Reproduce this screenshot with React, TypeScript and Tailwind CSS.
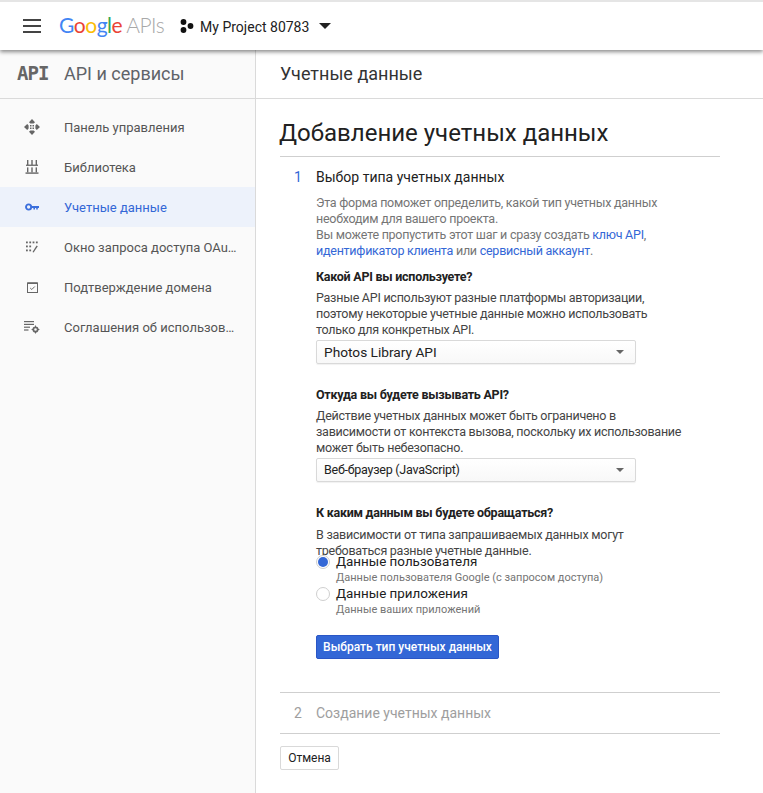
import React from 'react';

const font = { fontFamily: 'Roboto, "Liberation Sans", sans-serif' };

const DashIcon = () => (
  <svg width="16" height="16" viewBox="0 0 16 16" fill="#666">
    <path d="M8 0 11 3.2 9.6 4.6H6.4L5 3.2zM8 16 5 12.8 6.4 11.4H9.6L11 12.8zM0 8 3.2 5 4.6 6.4V9.6L3.2 11zM16 8 12.8 11 11.4 9.6V6.4L12.8 5z" />
    <rect x="6" y="6" width="1.5" height="1.5" />
    <rect x="8.5" y="6" width="1.5" height="1.5" />
    <rect x="6" y="8.5" width="1.5" height="1.5" />
    <rect x="8.5" y="8.5" width="1.5" height="1.5" />
  </svg>
);

const LibraryIcon = () => (
  <svg width="14" height="14" viewBox="0 0 14 14" fill="#666">
    <rect x="2" y="0" width="1.4" height="5" />
    <rect x="6.3" y="0" width="1.4" height="5" />
    <rect x="10.6" y="0" width="1.4" height="5" />
    <rect x="1" y="4.6" width="12" height="1.3" />
    <rect x="2" y="7.4" width="1.4" height="5" />
    <rect x="6.3" y="7.4" width="1.4" height="5" />
    <rect x="10.6" y="7.4" width="1.4" height="5" />
    <rect x="0.5" y="12.4" width="13" height="1.4" />
  </svg>
);

const KeyIcon = () => (
  <svg width="14" height="8" viewBox="0 0 14 8" fill="none">
    <circle cx="3.6" cy="4" r="2.6" stroke="#3b6fdc" strokeWidth="1.9" />
    <path d="M6 3h8v2h-1.2v1.6h-1.6V5H10v1.6H8.4V5H6z" fill="#3b6fdc" />
  </svg>
);

const ConsentIcon = () => (
  <svg width="12" height="12" viewBox="0 0 12 12" fill="#666">
    <rect x="0" y="0.5" width="1.8" height="1.8" />
    <rect x="3.3" y="0.5" width="1.8" height="1.8" />
    <rect x="6.6" y="0.5" width="1.8" height="1.8" />
    <rect x="9.9" y="0.5" width="1.8" height="1.8" />
    <rect x="0" y="4.5" width="1.8" height="1.8" />
    <rect x="3.3" y="4.5" width="1.8" height="1.8" />
    <rect x="3.3" y="8.5" width="1.8" height="1.8" />
    <rect x="0" y="8.5" width="1.8" height="1.8" />
    <path d="M6.5 11 10.6 4.6 11.8 5.3 7.6 11.6z" />
  </svg>
);

const DomainIcon = () => (
  <svg width="11" height="11" viewBox="0 0 11 11" fill="none" stroke="#666">
    <rect x="0.5" y="1" width="10" height="9.5" strokeWidth="1" />
    <path d="M0.5 1.2h10" strokeWidth="1.6" />
    <path d="M3.2 6 4.8 7.5 7.8 4.5" strokeWidth="1" />
  </svg>
);

const AgreementIcon = () => (
  <svg width="16" height="14" viewBox="0 0 16 14" fill="#666">
    <rect x="0" y="1" width="10" height="1.2" />
    <rect x="0" y="3.8" width="10" height="1.2" />
    <rect x="0" y="6.6" width="6" height="1.2" />
    <rect x="0" y="9.4" width="4.5" height="1.2" />
    <circle cx="11.5" cy="9.5" r="2.2" fill="none" stroke="#666" strokeWidth="1.8" />
    <path d="M11 5.6h1v1.4h-1zM11 12h1v1.4h-1zM7.6 9h1.4v1H7.6zM14 9h1.4v1H14z" />
  </svg>
);

const navItems = [
  { label: 'Панель управления', icon: <DashIcon /> },
  { label: 'Библиотека', icon: <LibraryIcon /> },
  { label: 'Учетные данные', icon: <KeyIcon />, active: true },
  { label: 'Окно запроса доступа OAu…', icon: <ConsentIcon /> },
  { label: 'Подтверждение домена', icon: <DomainIcon /> },
  { label: 'Соглашения об использов…', icon: <AgreementIcon /> },
];

const Select = ({ value, textClass }: { value: string; textClass: string }) => (
  <div className="w-[320px] h-[24px] flex items-center justify-between pl-[7px] pr-[11px] border border-[#d9d9d9] rounded-[2px] bg-gradient-to-b from-white to-[#f8f8f8] shadow-[0_1px_1px_rgba(0,0,0,0.06)] text-[#212121]">
    <span className={textClass}>{value}</span>
    <span className="w-0 h-0 border-x-[4px] border-x-transparent border-t-[4px] border-t-[#666]" />
  </div>
);

const Radio = ({ checked, title, sub }: { checked?: boolean; title: string; sub: string }) => (
  <div className="flex">
    <div className="w-[14px] h-[14px] mt-[1px] rounded-full border border-[#cfcfcf] bg-white flex items-center justify-center shrink-0">
      {checked && <div className="w-[10px] h-[10px] rounded-full bg-[#3367d6]" />}
    </div>
    <div className="ml-[6px]">
      <div className="text-[13.4px] leading-[16px] text-[#212121]">{title}</div>
      <div className="text-[11px] leading-[15px] text-[#757575]">{sub}</div>
    </div>
  </div>
);

export default function App() {
  return (
    <div className="w-[763px] h-[793px] bg-white overflow-hidden flex flex-col" style={font}>
      <header className="relative z-10 h-[50px] shrink-0 bg-white border-t-2 border-[#e5e5e5] shadow-[0_2px_4px_rgba(0,0,0,0.45)] flex items-center">
        <div className="ml-[23px] w-[18px] flex flex-col gap-[4px]">
          <div className="h-[2px] bg-[#444]" />
          <div className="h-[2px] bg-[#444]" />
          <div className="h-[2px] bg-[#444]" />
        </div>
        <div className="ml-[18px] text-[21px] leading-none tracking-[-0.5px] flex items-baseline mt-[-3px]" style={{ fontFamily: 'Lato, Roboto, sans-serif' }}>
          <span className="text-[#4285f4]">G</span>
          <span className="text-[#ea4335]">o</span>
          <span className="text-[#fbbc05]">o</span>
          <span className="text-[#4285f4]">g</span>
          <span className="text-[#34a853]">l</span>
          <span className="text-[#ea4335]">e</span>
          <span className="ml-[4px] text-[#a8a8a8] font-light">APIs</span>
        </div>
        <svg className="ml-[16px]" width="14" height="14" viewBox="0 0 14 14" fill="#111">
          <circle cx="3.5" cy="3" r="2.9" />
          <circle cx="3.5" cy="11" r="2.9" />
          <circle cx="10.5" cy="7" r="2.9" />
        </svg>
        <span className="ml-[6px] pt-[2px] text-[14px] text-[#212121]">My Project 80783</span>
        <span className="ml-[10px] w-0 h-0 border-x-[6px] border-x-transparent border-t-[6px] border-t-[#212121]" />
      </header>

      <div className="flex flex-1 min-h-0">
        <aside className="w-[256px] shrink-0 bg-[#fafafa] border-r border-[#dadada]">
          <div className="h-[49px] pb-[2px] flex items-center border-b border-[#dadada]">
            <span className="ml-[17px] w-[47px] text-[#666] text-[19px] font-bold tracking-[-1px]" style={{ fontFamily: '"DejaVu Sans Mono", monospace' }}>API</span>
            <span className="text-[18px] text-[#5f6368]">API и сервисы</span>
          </div>
          <nav className="pt-[8px]">
            {navItems.map((item) => (
              <div
                key={item.label}
                className={`h-[40px] flex items-center ${item.active ? 'bg-[#edf2fb] text-[#3367d6]' : 'text-[#555]'}`}
              >
                <div className="w-[64px] pl-[24px] pr-[24px] flex items-center justify-center shrink-0">{item.icon}</div>
                <span className="pt-[2px] text-[13px] whitespace-nowrap">{item.label}</span>
              </div>
            ))}
          </nav>
        </aside>

        <main className="flex-1 min-w-0">
          <div className="h-[49px] flex items-center border-b border-[#dadada] pl-[24px] pb-[2px] text-[18px] text-[#333]">Учетные данные</div>
          <div className="ml-[24px] w-[440px]">
            <h1 className="mt-[19px] h-[39px] text-[24px] leading-[30px] indent-[-1px] text-[#212121] border-b border-[#cfcfcf]">Добавление учетных данных</h1>
            <div className="flex mt-[11px]">
              <div className="w-[36px] pl-[14px] text-[14px] leading-[18px] text-[#3367d6]">1</div>
              <div className="flex-1 min-w-0">
                <div className="text-[14px] leading-[18px] text-[#212121]">Выбор типа учетных данных</div>
                <p className="mt-[9px] text-[12.5px] tracking-[-0.25px] leading-[16px] text-[#757575] whitespace-nowrap">
                  Эта форма поможет определить, какой тип учетных данных
                  <br />
                  необходим для вашего проекта.
                  <br />
                  Вы можете пропустить этот шаг и сразу создать <span className="text-[#3367d6]">ключ API</span>,
                  <br />
                  <span className="text-[#3367d6]">идентификатор клиента</span> или <span className="text-[#3367d6]">сервисный аккаунт</span>.
                </p>
                <h3 className="mt-[10px] text-[12.5px] tracking-[-0.25px] leading-[16px] font-bold text-[#212121]">Какой API вы используете?</h3>
                <p className="mt-[5px] mb-[2px] text-[12.5px] tracking-[-0.25px] leading-[16px] text-[#444] whitespace-nowrap">
                  Разные API используют разные платформы авторизации,
                  <br />
                  поэтому некоторые учетные данные можно использовать
                  <br />
                  только для конкретных API.
                </p>
                <Select value="Photos Library API" textClass="text-[13.7px]" />
                <h3 className="mt-[23px] text-[12.5px] tracking-[-0.25px] leading-[16px] font-bold text-[#212121]">Откуда вы будете вызывать API?</h3>
                <p className="mt-[5px] mb-[2px] text-[12.5px] tracking-[-0.25px] leading-[16px] text-[#444] whitespace-nowrap">
                  Действие учетных данных может быть ограничено в
                  <br />
                  зависимости от контекста вызова, поскольку их использование
                  <br />
                  может быть небезопасно.
                </p>
                <Select value="Веб-браузер (JavaScript)" textClass="text-[12.5px] tracking-[-0.25px]" />
                <h3 className="mt-[23px] text-[12.5px] tracking-[-0.25px] leading-[16px] font-bold text-[#212121]">К каким данным вы будете обращаться?</h3>
                <p className="mt-[6px] text-[12.5px] tracking-[-0.25px] leading-[16px] text-[#444] whitespace-nowrap">
                  В зависимости от типа запрашиваемых данных могут
                  <br />
                  требоваться разные учетные данные.
                </p>
                <div className="mt-[-5px] flex flex-col gap-[1px]">
                  <Radio checked title="Данные пользователя" sub="Данные пользователя Google (с запросом доступа)" />
                  <Radio title="Данные приложения" sub="Данные ваших приложений" />
                </div>
                <button className="mt-[18px] h-[24px] w-[183px] rounded-[2px] bg-[#3367d6] border border-[#2a56c6] text-[12px] font-medium text-white">Выбрать тип учетных данных</button>
              </div>
            </div>
            <div className="mt-[33px] h-[42px] border-y border-[#cfcfcf] flex items-center text-[14px] text-[#9e9e9e]">
              <span className="w-[36px] pl-[14px]">2</span>
              <span>Создание учетных данных</span>
            </div>
            <button className="mt-[12px] h-[24px] w-[59px] rounded-[2px] bg-white border border-[#d9d9d9] text-[12px] text-[#212121]">Отмена</button>
          </div>
        </main>
      </div>
    </div>
  );
}
